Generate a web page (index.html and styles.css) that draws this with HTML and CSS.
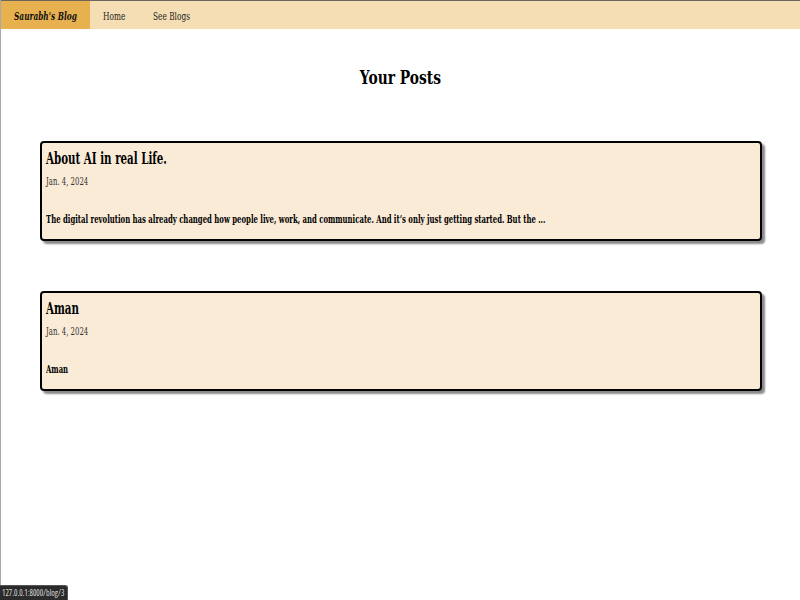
FILE: index.html
```html
<!DOCTYPE html>
<html>
<head>
<meta charset="utf-8">
<link rel="stylesheet" href="styles.css">
</head>
<body>
<nav class="nav">
  <a class="nav-item brand" href="#"><span class="squeeze">Saurabh's Blog</span></a>
  <a class="nav-item home" href="#"><span class="squeeze">Home</span></a>
  <a class="nav-item blogs" href="#"><span class="squeeze">See Blogs</span></a>
</nav>
<h1 class="heading"><span class="squeeze">Your Posts</span></h1>
<div class="posts">
  <div class="card">
    <h2 class="title"><span class="squeeze">About AI in real Life.</span></h2>
    <p class="date"><span class="squeeze">Jan. 4, 2024</span></p>
    <p class="excerpt"><span class="squeeze">The digital revolution has already changed how people live, work, and communicate. And it’s only just getting started. But the ...</span></p>
  </div>
  <div class="card">
    <h2 class="title"><span class="squeeze">Aman</span></h2>
    <p class="date"><span class="squeeze">Jan. 4, 2024</span></p>
    <p class="excerpt"><span class="squeeze">Aman</span></p>
  </div>
</div>
<div class="status">127.0.0.1:8000/blog/3</div>
</body>
</html>
```
FILE: styles.css
```css
html, body {
  margin: 0;
  padding: 0;
  height: 100%;
}
body {
  font-family: "DejaVu Serif", serif;
  background: #fff;
  border-left: 1px solid #a9a9a9;
  box-sizing: border-box;
  color: #000;
  overflow: hidden;
}
/* emulate the condensed serif face of the original */
.squeeze {
  display: inline-block;
  white-space: nowrap;
  transform-origin: 0 50%;
  transform: scaleX(0.65);
}
.nav {
  display: flex;
  height: 28px;
  background: #f5deb3;
  border-top: 1px solid #6b6659;
}
.nav-item {
  text-decoration: none;
  color: #222;
  font-size: 11px;
  line-height: 14px;
  display: block;
  padding: 9px 0 0 13px;
  box-sizing: border-box;
  min-width: 0;
  overflow: hidden;
}
.nav-item .squeeze {
  transform: scaleX(0.672);
}
.brand {
  flex: 0 0 89px;
  background: #e8b14f;
  font-weight: bold;
  font-style: italic;
  color: #111;
}
.home {
  flex: 0 0 50px;
}
.blogs {
  flex: 0 0 60px;
}
.heading {
  text-align: center;
  font-size: 18.5px;
  line-height: 24px;
  margin: 37px 0 0;
}
.heading .squeeze {
  transform-origin: 50% 50%;
  transform: scaleX(0.747);
}
.posts {
  display: flex;
  flex-direction: column;
  gap: 50px;
  margin: 51px 38px 0 39px;
}
.card {
  background: #faebd7;
  border: 2px solid #000;
  border-radius: 4px;
  box-shadow: 3px 3px 2px #8a8a8a;
  padding: 6px 4px 12px;
}
.title {
  font-size: 16.5px;
  line-height: 20px;
  margin: 0;
}
.title .squeeze {
  transform: scaleX(0.623);
}
.date {
  font-size: 11.5px;
  line-height: 14px;
  color: #333;
  margin: 5px 0 0;
}
.date .squeeze {
  transform: scaleX(0.603);
}
.excerpt {
  font-size: 11px;
  line-height: 14px;
  font-weight: bold;
  margin: 25px 0 0;
  overflow: hidden;
}
.excerpt .squeeze {
  transform: scaleX(0.627);
}
.status {
  position: fixed;
  left: 0;
  bottom: 0;
  background: #2b2b2b;
  color: #ddd;
  font-family: "Open Sans", "DejaVu Sans", sans-serif;
  font-stretch: condensed;
  font-size: 8px;
  line-height: 12px;
  padding: 1px 3px 1px 2px;
  border-top: 1px solid #555;
  border-right: 1px solid #555;
  border-top-right-radius: 3px;
}
```
